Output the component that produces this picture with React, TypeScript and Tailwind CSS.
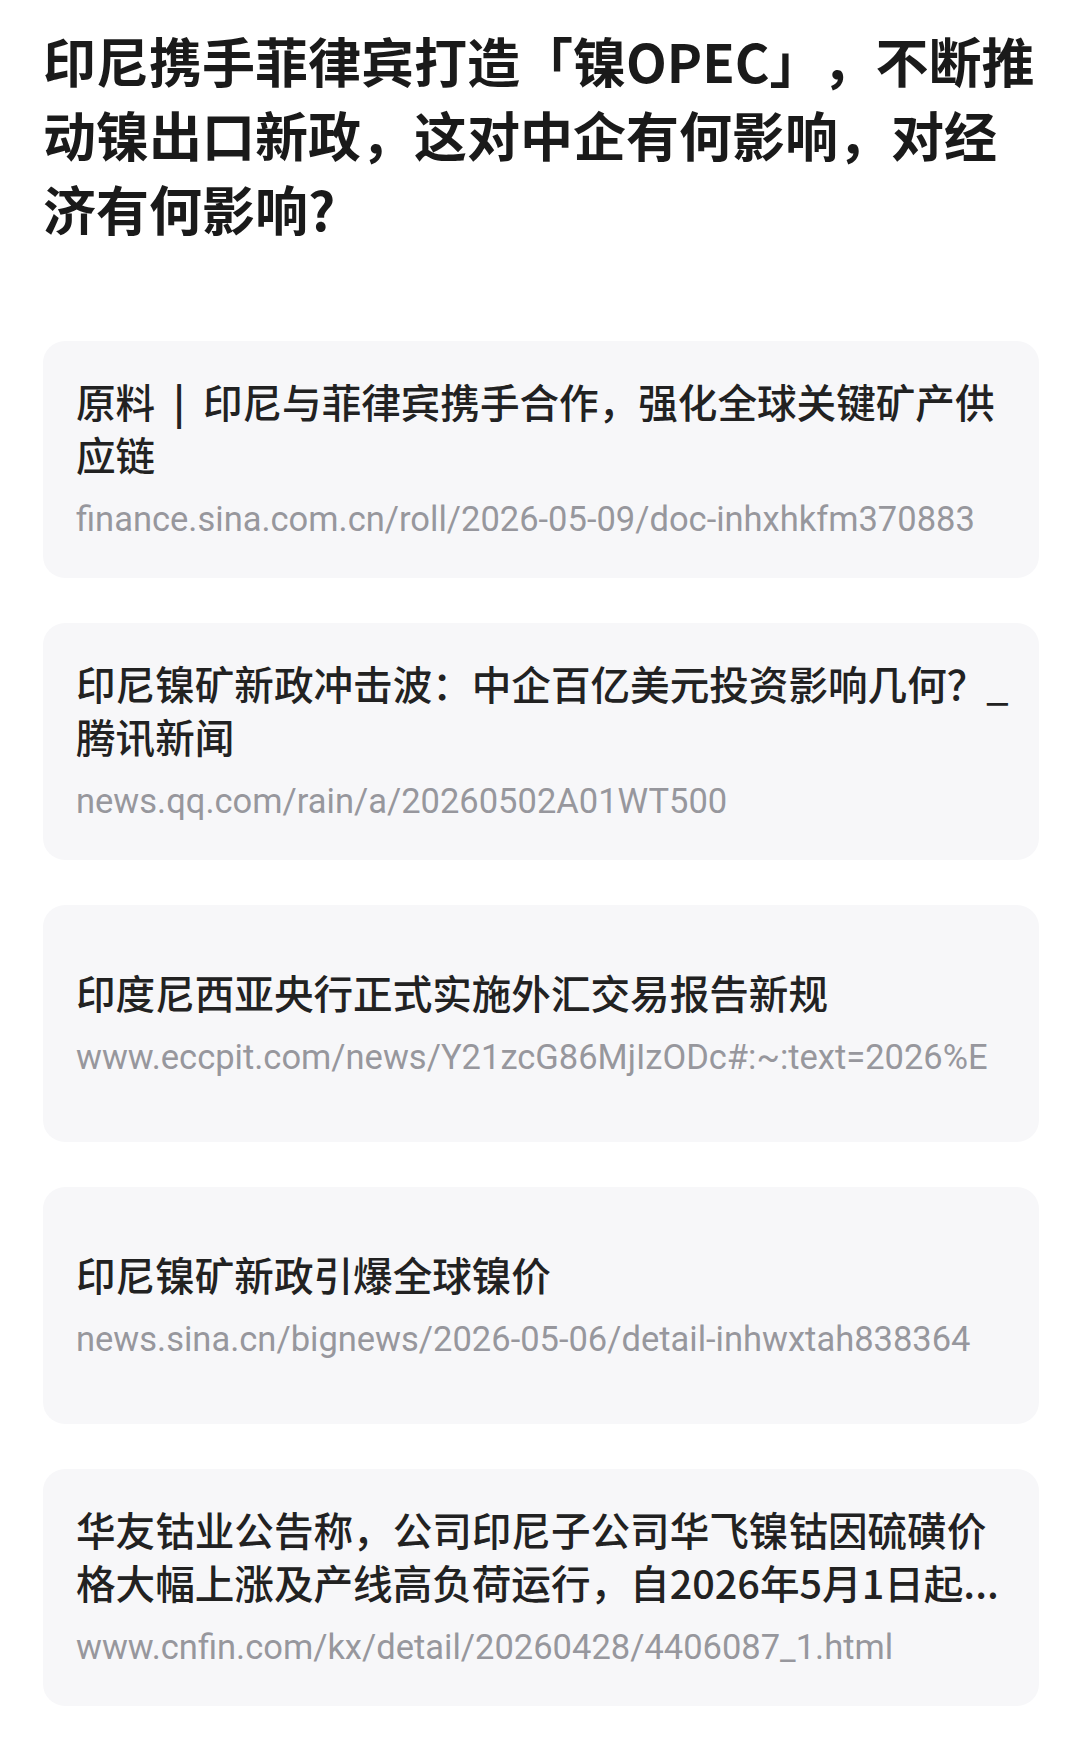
import React from "react";

const cjk = '"Noto Sans CJK SC", "Noto Sans", sans-serif';
const urlFont = 'Roboto, "Noto Sans", sans-serif';

type Item = { lines: React.ReactNode[]; url: string };

const items: Item[] = [
  {
    lines: [
      <>
        原料<span className="mx-[18px] font-bold">|</span>印尼与菲律宾携手合作，强化全球关键矿产供
      </>,
      "应链",
    ],
    url: "finance.sina.com.cn/roll/2026-05-09/doc-inhxhkfm370883",
  },
  {
    lines: ["印尼镍矿新政冲击波：中企百亿美元投资影响几何？_", "腾讯新闻"],
    url: "news.qq.com/rain/a/20260502A01WT500",
  },
  {
    lines: ["印度尼西亚央行正式实施外汇交易报告新规"],
    url: "www.eccpit.com/news/Y21zcG86MjIzODc#:~:text=2026%E",
  },
  {
    lines: ["印尼镍矿新政引爆全球镍价"],
    url: "news.sina.cn/bignews/2026-05-06/detail-inhwxtah838364",
  },
  {
    lines: ["华友钴业公告称，公司印尼子公司华飞镍钴因硫磺价", "格大幅上涨及产线高负荷运行，自2026年5月1日起..."],
    url: "www.cnfin.com/kx/detail/20260428/4406087_1.html",
  },
];

export default function App() {
  return (
    <div className="min-h-[1738px] w-full bg-white pl-[43px] pr-[41px] pt-[23px]">
      <h1
        className="text-[53px] font-bold leading-[74px] text-[#1a1a1a] [text-spacing-trim:space-all]"
        style={{ fontFamily: cjk }}
      >
        <div className="whitespace-nowrap">印尼携手菲律宾打造「镍OPEC」，不断推</div>
        <div className="whitespace-nowrap">动镍出口新政，这对中企有何影响，对经</div>
        <div className="whitespace-nowrap">济有何影响?</div>
      </h1>
      <div className="mt-[96px] flex flex-col gap-[45px]">
        {items.map((it, i) => (
          <div
            key={i}
            className="flex h-[237px] flex-col justify-center rounded-[22px] bg-[#f7f7f9] px-[33px] pb-[4px]"
          >
            <div
              className="text-[39.6px] font-medium leading-[53px] text-[#222222] [text-spacing-trim:space-all]"
              style={{ fontFamily: cjk }}
            >
              {it.lines.map((l, j) => (
                <div key={j} className="whitespace-nowrap">
                  {l}
                </div>
              ))}
            </div>
            <div
              className="mt-[17px] whitespace-nowrap text-[34.5px] leading-[44px] text-[#97979d]"
              style={{ fontFamily: urlFont }}
            >
              {it.url}
            </div>
          </div>
        ))}
      </div>
    </div>
  );
}
